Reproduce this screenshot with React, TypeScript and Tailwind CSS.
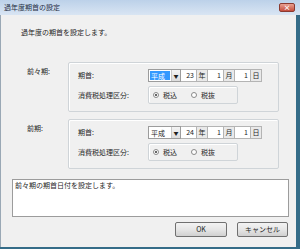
import React from 'react';

const font = { fontFamily: '"Noto Sans CJK JP", "Noto Sans", sans-serif' };

type Era = { label: string; year: string; selected?: boolean };

const DateRow: React.FC<Era> = ({ label, year, selected }) => (
  <div className="flex h-[13px] text-[7px] leading-[11px]">
    <div className="flex w-[33px] border border-[#9c9c9c] bg-white">
      <span className={selected ? 'm-[1px] flex-1 bg-[#3399ff] pl-[1px] text-white' : 'm-[1px] flex-1 pl-[1px]'}>{label}</span>
      <span className="flex w-[9px] items-center justify-center border-l border-[#c8c8c8] bg-gradient-to-b from-[#f4f4f4] to-[#dcdcdc] text-[5px]">▼</span>
    </div>
    <span className="w-[16px] border border-l-0 border-[#b4b4b4] bg-white pr-[2px] text-right">{year}</span>
    <span className="w-[11px] border border-l-0 border-[#b4b4b4] bg-[#e9e9e9] text-center">年</span>
    <span className="w-[16px] border border-l-0 border-[#b4b4b4] bg-white pr-[2px] text-right">1</span>
    <span className="w-[11px] border border-l-0 border-[#b4b4b4] bg-[#e9e9e9] text-center">月</span>
    <span className="w-[16px] border border-l-0 border-[#b4b4b4] bg-white pr-[2px] text-right">1</span>
    <span className="w-[11px] border border-l-0 border-[#b4b4b4] bg-[#e9e9e9] text-center">日</span>
  </div>
);

const Radio: React.FC<{ checked?: boolean; text: string }> = ({ checked, text }) => (
  <span className="flex items-center gap-[4px]">
    <span className="flex h-[6px] w-[6px] items-center justify-center rounded-full border border-[#8a8a8a] bg-white">
      {checked && <span className="h-[2px] w-[2px] rounded-full bg-[#333]" />}
    </span>
    {text}
  </span>
);

const PeriodGroup: React.FC<{ title: string } & Era> = ({ title, ...era }) => (
  <div className="flex">
    <div className="ml-[26px] w-[41px] pt-[5px] text-[7px] leading-[9px]">{title}</div>
    <div className="w-[211px] rounded-[2px] border border-[#cfd4d8] pb-[7px] pl-[9px] pt-[6px] shadow-[inset_1px_1px_0_#ffffff]">
      <div className="flex items-center">
        <span className="w-[70px] text-[7px] leading-[9px]">期首:</span>
        <DateRow {...era} />
      </div>
      <div className="mt-[4px] flex items-center">
        <span className="w-[70px] text-[7px] leading-[9px]">消費税処理区分:</span>
        <div className="flex h-[18px] w-[90px] items-center gap-[14px] rounded-[2px] border border-[#cfd4d8] pl-[4px] text-[7px] leading-[9px] shadow-[inset_1px_1px_0_#ffffff]">
          <Radio checked text="税込" />
          <Radio text="税抜" />
        </div>
      </div>
    </div>
  </div>
);

const Button: React.FC<{ children: React.ReactNode; w: string }> = ({ children, w }) => (
  <button className={`${w} h-[15px] rounded-[2px] border border-[#707070] bg-gradient-to-b from-[#f3f3f3] via-[#e6e6e6] to-[#d0d0d0] text-[7px] leading-[13px] text-[#1e1e1e]`}>
    {children}
  </button>
);

export default function App() {
  return (
    <div className="flex h-[249px] w-[300px] flex-col bg-[#356c88] text-[#1e1e1e]" style={font}>
      <div className="flex h-[15px] items-center justify-between bg-gradient-to-b from-[#bcd1e9] to-[#d9e5f3] pl-[4px] pr-[5px]">
        <span className="text-[7px] leading-[9px] text-[#1f2f45]">過年度期首の設定</span>
        <span className="flex h-[9px] w-[16px] items-center justify-center rounded-[2px] border border-[#8b3a30] bg-gradient-to-b from-[#e8a091] to-[#c44c3c] text-[7px] leading-none font-bold text-white">×</span>
      </div>
      <div className="flex flex-1">
        <div className="flex w-[296px] flex-col border-l border-[#9aa8b5] bg-[#f0f0f0]">
          <div className="ml-[20px] mt-[13px] text-[7px] leading-[9px]">過年度の期首を設定します。</div>
          <div className="mt-[25px]">
            <PeriodGroup title="前々期:" label="平成" year="23" selected />
          </div>
          <div className="mt-[7px]">
            <PeriodGroup title="前期:" label="平成" year="24" />
          </div>
          <div className="ml-[11px] mt-[10px] h-[38px] w-[277px] border border-[#9c9c9c] bg-white pl-[2px] pt-[1px] text-[7px] leading-[9px]">
            前々期の期首日付を設定します。
          </div>
          <div className="mr-[8px] mt-[5px] flex justify-end gap-[10px]">
            <Button w="w-[52px]">OK</Button>
            <Button w="w-[51px]">キャンセル</Button>
          </div>
        </div>
      </div>
      <div className="h-[2px]" />
    </div>
  );
}
